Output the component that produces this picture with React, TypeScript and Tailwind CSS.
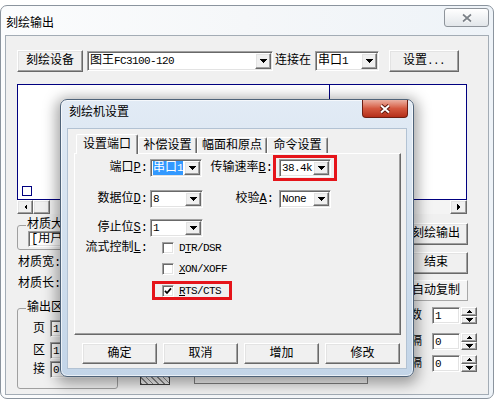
import React from "react";

const raised =
  "bg-[#f0f0f0] border border-t-white border-l-white border-r-[#696969] border-b-[#696969] shadow-[inset_-1px_-1px_0_#a0a0a0,inset_1px_1px_0_#e3e3e3]";
const sunken =
  "bg-white border border-t-[#a0a0a0] border-l-[#a0a0a0] border-r-white border-b-white shadow-[inset_1px_1px_0_#696969,inset_-1px_-1px_0_#e3e3e3]";

const Lat = ({ children }: { children: React.ReactNode }) => (
  <span className="text-[11px] tracking-[-0.6px]">{children}</span>
);

const Tri = ({ dir }: { dir: "down" | "up" | "left" | "right" }) => {
  if (dir === "down")
    return (
      <svg width="7" height="4" viewBox="0 0 7 4" shapeRendering="crispEdges">
        <polygon points="0,0 7,0 3.5,4" fill="#000" />
      </svg>
    );
  if (dir === "up")
    return (
      <svg width="5" height="3" viewBox="0 0 5 3" shapeRendering="crispEdges">
        <polygon points="2.5,0 5,3 0,3" fill="#000" />
      </svg>
    );
  if (dir === "left")
    return (
      <svg width="3" height="6" viewBox="0 0 3 6" shapeRendering="crispEdges">
        <polygon points="3,0 3,6 0,3" fill="#000" />
      </svg>
    );
  return (
    <svg width="3" height="6" viewBox="0 0 3 6" shapeRendering="crispEdges">
      <polygon points="0,0 3,3 0,6" fill="#000" />
    </svg>
  );
};

const Btn = ({ className = "", children }: { className?: string; children: React.ReactNode }) => (
  <button type="button" className={`${raised} flex items-center justify-center shrink-0 ${className}`}>
    {children}
  </button>
);

const Combo = ({ className = "", children }: { className?: string; children: React.ReactNode }) => (
  <div className={`${sunken} flex items-stretch p-[1px] shrink-0 ${className}`}>
    <div className="flex-1 flex items-center pl-[1px] overflow-hidden whitespace-nowrap">{children}</div>
    <div className={`${raised} w-[16px] flex items-center justify-center`}>
      <Tri dir="down" />
    </div>
  </div>
);

const Check = ({ checked = false }: { checked?: boolean }) => (
  <span className={`${sunken} w-[12px] h-[12px] flex items-center justify-center shrink-0`}>
    {checked && (
      <svg width="8" height="8" viewBox="0 0 8 8">
        <path d="M1 3.8l2 2.2 4-4.6" stroke="#000" strokeWidth="1.8" fill="none" />
      </svg>
    )}
  </span>
);

const Spin = () => (
  <div className="ml-[1px] w-[16px] h-[17px] flex flex-col">
    <div className={`${raised} flex-1 flex items-center justify-center`}>
      <Tri dir="up" />
    </div>
    <div className={`${raised} flex-1 flex items-center justify-center`}>
      <Tri dir="down" />
    </div>
  </div>
);

export default function App() {
  return (
    <div className="relative w-[494px] h-[405px] overflow-hidden bg-white font-['Liberation_Mono','Noto_Sans_CJK_SC',monospace] text-[12px] leading-[14px] text-black">
      {/* main window */}
      <div className="absolute left-0 top-[5px] w-[494px] h-[394px] rounded-[7px] border border-[#8b949e] bg-linear-to-r from-[#fbfcfd] via-[#f5f7f9] to-[#eef3f8] flex flex-col">
        <div className="h-[29px] flex items-start shrink-0">
          <span className="ml-[5px] mt-[11px]">刻绘输出</span>
          <div className="ml-auto mr-[4px] mt-[2px] w-[45px] h-[19px] rounded-[3px] border border-[#8e949b] bg-linear-to-b from-white to-[#e2e6ea] flex items-center justify-center">
            <svg width="12" height="10" viewBox="0 0 12 10">
              <path d="M2 1.5L10 8.5M10 1.5L2 8.5" stroke="#fff" strokeWidth="3.6" />
              <path d="M2 1.5L10 8.5M10 1.5L2 8.5" stroke="#7d838a" strokeWidth="1.8" />
            </svg>
          </div>
        </div>

        <div className="mx-[4px] mb-[3px] flex-1 border border-[#a3acb5] bg-[#f0f0f0] pl-[11px] pt-[14px] flex flex-col">
          <div className="flex items-center h-[22px]">
            <Btn className="w-[66px] h-[22px]">刻绘设备</Btn>
            <Combo className="ml-[4px] w-[186px] h-[20px]">
              图王<Lat>FC3100-120</Lat>
            </Combo>
            <span className="ml-[2px]">连接在</span>
            <Combo className="ml-[4px] w-[64px] h-[20px]">
              串口<Lat>1</Lat>
            </Combo>
            <Btn className="ml-[10px] w-[70px] h-[22px]">
              设置<Lat>...</Lat>
            </Btn>
          </div>

          <div className="mt-[12px] relative w-[450px] h-[116px] border border-[#000080] bg-white">
            <div className="absolute left-[311px] top-0 bottom-0 w-px bg-[#000080]" />
            <div className="absolute left-[4px] bottom-[3px] w-[10px] h-[10px] border border-[#000080]" />
          </div>
          <div className="w-[450px] h-[14px] flex">
            <div className={`${raised} w-[16px] flex items-center justify-center`}>
              <Tri dir="left" />
            </div>
            <div className={`${raised} w-[17px]`} />
            <div className="flex-1 bg-[#f4f4f4]" />
            <div className={`${raised} w-[17px] flex items-center justify-center`}>
              <Tri dir="right" />
            </div>
          </div>

          <div className="flex">
            <div className="w-[101px] flex flex-col">
              <fieldset className="mt-[5px] border border-[#a0a0a0] rounded-[3px] pl-[10px] pb-[2px] pr-[2px]">
                <legend className="ml-[-2px] px-[1px] leading-[12px]">材质大小</legend>
                <Combo className="w-[85px] h-[16px]">[用户</Combo>
              </fieldset>
              <div className="mt-[4px] h-[18px] flex items-center pl-[1px]">
                <span>材质宽:</span>
                <div className={`${sunken} ml-[2px] w-[50px] h-[18px]`} />
              </div>
              <div className="mt-[3px] h-[18px] flex items-center pl-[1px]">
                <span>材质长:</span>
                <div className={`${sunken} ml-[2px] w-[50px] h-[18px]`} />
              </div>
              <fieldset className="mt-[9px] border border-[#a0a0a0] rounded-[3px] pl-[15px] pb-[10px]">
                <legend className="ml-[-7px] px-[1px] leading-[12px]">输出区域</legend>
                <div className="mt-[6px] h-[17px] flex items-center">
                  <span className="w-[12px]">页</span>
                  <div className={`${sunken} ml-[5px] w-[50px] h-[17px] flex items-center pl-[2px]`}>
                    <Lat>1</Lat>
                  </div>
                </div>
                <div className="mt-[5px] h-[17px] flex items-center">
                  <span className="w-[12px]">区</span>
                  <div className={`${sunken} ml-[5px] w-[50px] h-[17px] flex items-center pl-[2px]`}>
                    <Lat>1</Lat>
                  </div>
                </div>
                <div className="mt-[2px] h-[17px] flex items-center">
                  <span className="w-[12px]">接</span>
                  <div className={`${sunken} ml-[5px] w-[50px] h-[17px] flex items-center pl-[2px]`}>
                    <Lat>0</Lat>
                  </div>
                </div>
              </fieldset>
            </div>

            <div className="w-[286px] pt-[156px] flex items-start">
              <div className="ml-[22px] w-[30px] h-[15px] border border-[#404040] bg-[repeating-linear-gradient(45deg,#8a8a8a_0_1px,#f0f0f0_1px_4px)]" />
              <div className="ml-[24px] w-[174px] h-[14px] border border-[#808080]" />
            </div>

            <div className="w-[74px] pt-[9px] flex flex-col">
              <Btn className="w-[64px] h-[22px]">刻绘输出</Btn>
              <Btn className="mt-[7px] w-[64px] h-[22px]">结束</Btn>
              <div className="mt-[6px] w-[64px] h-[21px] border border-t-white border-l-white border-r-[#a8a8a8] border-b-[#a8a8a8] bg-[#f4f4f4] flex items-center justify-center">
                自动复制
              </div>
              <div className="mt-[6px] h-[17px] flex items-center">
                <span className="w-[18px] text-right">数</span>
                <div className={`${sunken} ml-[10px] w-[28px] h-[17px] flex items-center pl-[2px]`}>
                  <Lat>1</Lat>
                </div>
                <Spin />
              </div>
              <div className="mt-[9px] h-[17px] flex items-center">
                <span className="w-[18px] text-right">隔</span>
                <div className={`${sunken} ml-[10px] w-[28px] h-[17px] flex items-center pl-[2px]`}>
                  <Lat>0</Lat>
                </div>
                <Spin />
              </div>
              <div className="mt-[5px] h-[17px] flex items-center">
                <span className="w-[18px] text-right">隔</span>
                <div className={`${sunken} ml-[10px] w-[28px] h-[17px] flex items-center pl-[2px]`}>
                  <Lat>0</Lat>
                </div>
                <Spin />
              </div>
            </div>
          </div>
        </div>
      </div>

      {/* settings dialog */}
      <div className="absolute left-[60px] top-[99px] w-[354px] h-[278px] rounded-[7px] border border-[#4f6379] bg-linear-to-b from-[#e2ebf5] via-[#d2e0ee] to-[#c3d5e8] shadow-[0_3px_14px_4px_rgba(0,0,0,0.35),inset_0_0_0_1px_rgba(255,255,255,0.65)] flex flex-col">
        <div className="h-[28px] flex items-start shrink-0">
          <span className="ml-[8px] mt-[6px]">刻绘机设置</span>
          <div className="ml-auto mr-[5px] w-[46px] h-[18px] rounded-b-[4px] border border-t-0 border-[#6e1e12] bg-linear-to-b from-[#eab0a2] via-[#d4583f] to-[#b42e19] flex items-center justify-center">
            <svg width="12" height="10" viewBox="0 0 12 10">
              <path d="M2 1.5L10 8.5M10 1.5L2 8.5" stroke="#5a150b" strokeWidth="3.8" />
              <path d="M2 1.5L10 8.5M10 1.5L2 8.5" stroke="#fff" strokeWidth="2" />
            </svg>
          </div>
        </div>

        <div className="mx-[6px] h-[241px] border border-[#b2c2d3] bg-[#f0f0f0] flex flex-col">
          <div className="h-[24px] flex items-end pl-[8px] shrink-0">
            <div className="relative z-10 mb-[-1px] w-[62px] h-[20px] bg-[#f0f0f0] rounded-t-[2px] border border-b-0 border-t-white border-l-white border-r-[#696969] shadow-[inset_-1px_0_0_#a0a0a0] flex justify-center pt-[3px]">
              设置端口
            </div>
            <div className="w-[59px] h-[16px] rounded-t-[2px] border border-b-0 border-t-white border-l-white border-r-[#696969] shadow-[inset_-1px_0_0_#a0a0a0] flex justify-center pt-[1px]">
              补偿设置
            </div>
            <div className="w-[70px] h-[16px] rounded-t-[2px] border border-b-0 border-t-white border-l-white border-r-[#696969] shadow-[inset_-1px_0_0_#a0a0a0] flex justify-center pt-[1px]">
              幅面和原点
            </div>
            <div className="w-[61px] h-[16px] rounded-t-[2px] border border-b-0 border-t-white border-l-white border-r-[#696969] shadow-[inset_-1px_0_0_#a0a0a0] flex justify-center pt-[1px]">
              命令设置
            </div>
          </div>

          <div className="ml-[6px] w-[327px] h-[182px] border border-t-white border-l-white border-r-[#696969] border-b-[#696969] shadow-[inset_-1px_-1px_0_#a0a0a0] flex flex-col">
            <div className="mt-[5px] h-[18px] flex items-center">
              <span className="w-[73px] text-right">
                端口<u>P</u>:
              </span>
              <Combo className="ml-[2px] w-[52px] h-[18px]">
                <span className="bg-[#3399ff] text-white">
                  串口<Lat>1</Lat>
                </span>
              </Combo>
              <span className="w-[71px] text-right">
                传输速率<u>B</u>:
              </span>
              <div className="border-[3px] border-[#e5141a] px-[3px] py-[1px]">
                <Combo className="w-[52px] h-[18px]">
                  <Lat>38.4k</Lat>
                </Combo>
              </div>
            </div>

            <div className="mt-[13px] h-[18px] flex items-center">
              <span className="w-[73px] text-right">
                数据位<u>D</u>:
              </span>
              <Combo className="ml-[2px] w-[53px] h-[18px]">
                <Lat>8</Lat>
              </Combo>
              <span className="w-[71px] text-right">
                校验<u>A</u>:
              </span>
              <Combo className="ml-[5px] w-[52px] h-[18px]">
                <Lat>None</Lat>
              </Combo>
            </div>

            <div className="mt-[11px] h-[18px] flex items-center">
              <span className="w-[73px] text-right">
                停止位<u>S</u>:
              </span>
              <Combo className="ml-[2px] w-[53px] h-[18px]">
                <Lat>1</Lat>
              </Combo>
            </div>

            <div className="mt-[4px] h-[14px] flex items-center">
              <span className="w-[73px] text-right whitespace-nowrap">
                流式控制<u>L</u>:
              </span>
              <span className="ml-[14px]">
                <Check />
              </span>
              <span className="ml-[5px]">
                <Lat>
                  D<u>T</u>R/DSR
                </Lat>
              </span>
            </div>

            <div className="mt-[7px] h-[14px] flex items-center pl-[87px]">
              <Check />
              <span className="ml-[5px]">
                <Lat>
                  <u>X</u>ON/XOFF
                </Lat>
              </span>
            </div>

            <div className="mt-[5px] ml-[77px] w-[80px] h-[19px] border-[3px] border-[#e5141a] flex items-center pl-[7px]">
              <Check checked />
              <span className="ml-[5px]">
                <Lat>
                  <u>R</u>TS/CTS
                </Lat>
              </span>
            </div>
          </div>

          <div className="mt-[8px] pl-[14px] flex gap-[6px]">
            <Btn className="w-[75px] h-[21px]">确定</Btn>
            <Btn className="w-[75px] h-[21px]">取消</Btn>
            <Btn className="w-[75px] h-[21px]">增加</Btn>
            <Btn className="w-[75px] h-[21px]">修改</Btn>
          </div>
        </div>
      </div>
    </div>
  );
}
